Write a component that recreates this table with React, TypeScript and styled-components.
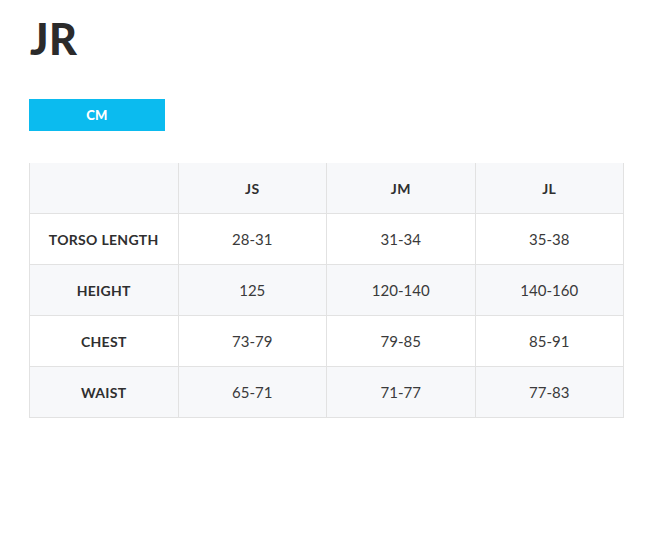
import React from "react";
import styled, { createGlobalStyle } from "styled-components";

const Global = createGlobalStyle`
  html, body { margin: 0; padding: 0; background: #fff; }
  body { font-family: "Lato", "Open Sans", sans-serif; color: #333; }
`;

const Page = styled.div`
  padding: 14px 29px 0 29px;
  display: flex;
  flex-direction: column;
  align-items: flex-start;
`;

const Title = styled.h1`
  margin: 0;
  font-size: 43px;
  line-height: 50px;
  font-weight: 900;
  letter-spacing: 0.5px;
  color: #2b2b2b;
  padding-left: 1px;
`;

const UnitButton = styled.button`
  margin-top: 35px;
  width: 136px;
  height: 32px;
  border: none;
  background: #0bbbef;
  color: #fff;
  font-family: "Lato", sans-serif;
  font-weight: 900;
  font-size: 13px;
  letter-spacing: 0.3px;
  padding: 0;
`;

const Table = styled.div`
  margin-top: 32px;
  width: 594px;
  display: grid;
  grid-template-columns: repeat(4, 1fr);
  border-left: 1px solid #e2e2e2;
`;

const Cell = styled.div<{ $shade: boolean; $label?: boolean }>`
  height: 50px;
  display: flex;
  align-items: center;
  justify-content: center;
  border-right: 1px solid #e2e2e2;
  border-bottom: 1px solid #e2e2e2;
  background: ${(p) => (p.$shade ? "#f7f8fa" : "#fff")};
  font-size: ${(p) => (p.$label ? "14px" : "15px")};
  letter-spacing: ${(p) => (p.$label ? "0.3px" : "0")};
  font-weight: ${(p) => (p.$label ? 700 : 400)};
  color: ${(p) => (p.$label ? "#2f2f2f" : "#3a3a3a")};
`;

const header = ["", "JS", "JM", "JL"];
const rows: string[][] = [
  ["TORSO LENGTH", "28-31", "31-34", "35-38"],
  ["HEIGHT", "125", "120-140", "140-160"],
  ["CHEST", "73-79", "79-85", "85-91"],
  ["WAIST", "65-71", "71-77", "77-83"],
];

export default function App() {
  return (
    <>
      <Global />
      <Page>
        <Title>JR</Title>
        <UnitButton>CM</UnitButton>
        <Table>
          {header.map((h, i) => (
            <Cell key={"h" + i} $shade $label>
              {h}
            </Cell>
          ))}
          {rows.map((r, ri) =>
            r.map((c, ci) => (
              <Cell key={ri + "-" + ci} $shade={ri % 2 === 1} $label={ci === 0}>
                {c}
              </Cell>
            ))
          )}
        </Table>
      </Page>
    </>
  );
}
